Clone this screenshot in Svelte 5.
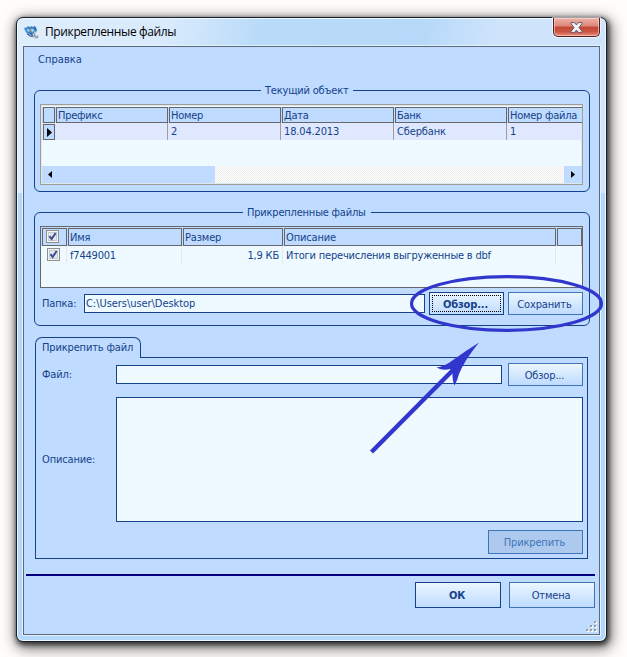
<script lang="ts">
	const objectHeaders = ['Префикс', 'Номер', 'Дата', 'Банк', 'Номер файла'];
	const objectRow = ['', '2', '18.04.2013', 'Сбербанк', '1'];

	let folder = $state('C:\\Users\\user\\Desktop');
	let file = $state('');
	let description = $state('');
</script>

{#snippet check()}
	<svg class="check" width="13" height="13" viewBox="0 0 13 13">
		<rect x=".5" y=".5" width="12" height="12" fill="#f4f4f4" stroke="#8e8f8f" />
		<rect x="2.5" y="2.5" width="8" height="8" fill="#e4e7eb" stroke="#c5cad0" />
		<path d="M3.5 6.2 5.6 9 9.7 3" fill="none" stroke="#3c4d91" stroke-width="2" />
	</svg>
{/snippet}

<div class="window">
	<div class="titlebar">
		<svg class="app-icon" width="16" height="16" viewBox="0 0 16 16">
			<path d="M0 4 2.500 3.500 4 2l2 1 1.500-1L9 3l2-1.500.5 2L13 5l-.5 3L10 10l-4 .5L3.500 9 2 8.500z" fill="#4089c8" />
			<path d="m2.500 5 2.500.5L5.500 8 4 7.500zM7.500 5l2.500.5L9 8 7 7z" fill="#b4daf4" />
			<path d="M3 9.500 6 12l2.500.5M6 9l3 3M11 3l.5 3" stroke="#2a5c92" stroke-width="1.200" fill="none" />
			<path d="m10.500 6.500 1.500 4 2.500 1.500-.5 2-3 .5-3-1.500 2-1.500-1-3z" fill="#8b98a6" />
			<path d="m11 7.500.5 3.500 2 1M9.500 13l2 .5" stroke="#e9edf0" fill="none" />
			<path d="M6 5h1.500v1.500H6z" fill="#d99a42" />
		</svg>
		<span class="title">Прикрепленные файлы</span>
		<button class="close" aria-label="Закрыть">
			<svg width="13" height="11" viewBox="0 0 13 11">
				<path
					d="M1 .6h3.700L6.500 3 8.300.6H12v1L9 5.500l3 3.900v1H8.300L6.500 8l-1.800 2.400H1v-1l3-3.900-3-3.900z"
					fill="#f3f3f5"
					stroke="#5c5a6c"
				/>
			</svg>
		</button>
	</div>

	<div class="client">
		<div class="menu">Справка</div>

		<fieldset class="current">
			<legend>Текущий объект</legend>
			<div class="grid object-grid">
				<div class="row head">
					<div class="cell"></div>
					{#each objectHeaders as header}
						<div class="cell">{header}</div>
					{/each}
				</div>
				<div class="row data">
					<div class="cell marker">
						<svg width="5" height="9" viewBox="0 0 5 9"><path d="M0 0 5 4.500 0 9z" /></svg>
					</div>
					{#each objectRow as value}
						<div class="cell">{value}</div>
					{/each}
				</div>
				<div class="scrollbar">
					<div class="thumb">
						<svg width="4" height="7" viewBox="0 0 4 7"><path d="M4 0v7L0 3.500z" /></svg>
					</div>
					<div class="scroll-right">
						<svg width="4" height="7" viewBox="0 0 4 7"><path d="M0 0v7l4-3.500z" /></svg>
					</div>
				</div>
			</div>
		</fieldset>

		<fieldset class="attached">
			<legend>Прикрепленные файлы</legend>
			<div class="grid file-grid">
				<div class="row head">
					<div class="cell">{@render check()}</div>
					<div class="cell">Имя</div>
					<div class="cell">Размер</div>
					<div class="cell">Описание</div>
					<div class="cell"></div>
				</div>
				<div class="row data">
					<div class="cell">{@render check()}</div>
					<div class="cell">f7449001</div>
					<div class="cell size">1,9 КБ</div>
					<div class="cell">Итоги перечисления выгруженные в dbf</div>
					<div class="cell"></div>
				</div>
			</div>
			<div class="folder">
				<label for="folder">Папка:</label>
				<input id="folder" class="field" bind:value={folder} />
				<button class="btn focused">Обзор...</button>
				<button class="btn">Сохранить</button>
			</div>
		</fieldset>

		<div class="tab">Прикрепить файл</div>
		<div class="panel">
			<div class="line">
				<label for="file">Файл:</label>
				<input id="file" class="field" bind:value={file} />
				<button class="btn">Обзор...</button>
			</div>
			<div class="line tall">
				<label for="description">Описание:</label>
				<textarea id="description" class="field" bind:value={description}></textarea>
			</div>
			<button class="btn attach" disabled>Прикрепить</button>
		</div>

		<div class="divider"></div>
		<div class="footer">
			<button class="btn default">ОК</button>
			<button class="btn">Отмена</button>
		</div>
		<svg class="grip" width="12" height="12" viewBox="0 0 12 12">
			{#each [[8, 0], [4, 4], [8, 4], [0, 8], [4, 8], [8, 8]] as [x, y]}
				<rect x={x + 1} y={y + 1} width="2" height="2" fill="#fff" />
				<rect {x} {y} width="2" height="2" fill="#a09d99" />
			{/each}
		</svg>
	</div>
</div>

<svg class="notes" width="627" height="657" viewBox="0 0 627 657">
	<ellipse cx="506.500" cy="303.500" rx="95" ry="26.800" fill="none" stroke="#3137cd" stroke-width="3.200" />
	<path d="M371.500 452 456 367" stroke="#3137cd" stroke-width="4.400" />
	<path d="M479 342.500Q464 361 459 374 457.500 380 454.500 385.500 452 380 452.500 371L450 369Q443 371 436.500 367.500 444 367 453 360 467 350 479 342.500z" fill="#3137cd" />
</svg>

<style>
	:global(body) {
		margin: 0;
		background: #fffcfb;
	}

	:global(#app) {
		position: relative;
		width: 627px;
		height: 657px;
		overflow: hidden;
		font: 11px/15px 'DejaVu Sans Condensed', 'DejaVu Sans', sans-serif;
		letter-spacing: -0.15px;
		color: #15428b;
	}

	.window,
	.window * {
		box-sizing: border-box;
	}

	.window {
		display: flex;
		flex-direction: column;
		width: 591px;
		height: 625px;
		border: 1px solid #15202c;
		border-radius: 7px;
		padding: 0 6px 6px 5px;
		background:
			linear-gradient(100deg, #deedfc 0, #d8eafc 25%, #b8dbf9 40%, #b6d9f9 66%, #cfe4fb 78%, #cfe4fb 100%) 0 0 / 100% 175px no-repeat,
			#b5d7fa;
		box-shadow:
			inset 0 0 0 1px #f0f8ff,
			1px 2px 5px 1px rgba(0, 0, 0, 0.65),
			2px 4px 14px 3px rgba(0, 0, 0, 0.5);
		translate: 16px 17px;
	}

	.titlebar {
		display: flex;
		flex: none;
		height: 27px;
	}

	.app-icon {
		margin: 6px 0 0 2px;
	}

	.title {
		margin: 4px 0 0 5px;
		font: 12px/20px 'Open Sans', sans-serif;
		letter-spacing: -0.38px;
		color: #000;
	}

	.close {
		display: flex;
		justify-content: center;
		width: 47px;
		height: 19px;
		margin-left: auto;
		padding: 4px 0 0;
		border: 1px solid #541f24;
		border-top: 0;
		border-radius: 0 0 5px 5px;
		background: linear-gradient(#efb4a9, #dd8577 45%, #c34835 50%, #ca5443 75%, #e78c7d);
		box-shadow: inset 0 0 0 1px rgba(255, 220, 210, 0.6), 0 0 0 1px rgba(255, 255, 255, 0.6);
	}

	.client {
		flex: 1;
		position: relative;
		border: 1px solid #5b6878;
		padding: 0 9px 0 10px;
		background: #bfdbff;
		box-shadow: 0 0 0 1px #e3f2ff;
		margin: 1px 0 0 1px;
	}

	.menu {
		height: 36px;
		padding: 5px 5px 4px 4px;
		letter-spacing: 0.05px;
	}

	fieldset {
		min-width: 0;
		margin: 0;
		border: 1px solid #15428b;
		border-radius: 6px;
		padding: 6px 6px 6px 5px;
	}

	legend {
		height: 15px;
		padding: 0 4px;
		letter-spacing: -0.2px;
		white-space: nowrap;
	}

	.current {
		height: 109px;
	}

	.current legend {
		width: 92px;
		margin-left: 221px;
	}

	.attached {
		height: 121px;
		margin-top: 13px;
	}

	.attached legend {
		width: 128px;
		margin-left: 203px;
	}

	.grid {
		overflow: hidden;
		background: #eefaff;
	}

	.row {
		display: grid;
	}

	.cell {
		white-space: nowrap;
		overflow: hidden;
	}

	.object-grid {
		height: 81px;
		border: 1px solid #a09d99;
		padding: 2px 0 1px 1px;
		box-shadow: inset 0 0 0 1px #dce8ee;
	}

	.object-grid .row {
		grid-template-columns: 13px repeat(5, 113px);
	}

	.object-grid .head {
		height: 16px;
		background: #bfdbff;
	}

	.object-grid .head .cell {
		margin-left: 1px;
		border: 1px solid #67676b;
		padding-left: 1px;
		line-height: 15px;
		letter-spacing: -0.25px;
	}

	.object-grid .data {
		height: 17px;
		background: #dfe8ff;
	}

	.object-grid .data .cell {
		border-right: 1px solid #a09d99;
		padding: 1px 0 0 3px;
	}

	.object-grid .data .marker {
		display: flex;
		align-items: center;
		justify-content: center;
		width: 12px;
		margin: 1px 0 0 1px;
		border: 1px solid #67676b;
		padding: 0;
		background: #bfdbff;
	}

	.scrollbar {
		display: flex;
		justify-content: space-between;
		height: 17px;
		margin-top: 26px;
		background: repeating-conic-gradient(#fff 0 25%, #ececec 0 50%) 0 0 / 2px 2px;
	}

	.thumb,
	.scroll-right {
		display: flex;
		align-items: center;
		background: #bfdbff;
	}

	.thumb {
		width: 173px;
		padding-left: 6px;
	}

	.scroll-right {
		width: 18px;
		padding-left: 7px;
	}

	.file-grid {
		height: 62px;
		border: 1px solid #67676b;
	}

	.file-grid .row {
		grid-template-columns: 26px 115px 101px 273px 26px;
	}

	.file-grid .head {
		height: 19px;
		padding-top: 1px;
		background: #bfdbff;
	}

	.file-grid .head .cell {
		margin-left: 1px;
		border: 1px solid #67676b;
		padding-left: 1px;
		line-height: 17px;
	}

	.file-grid .data .cell {
		height: 18px;
		border-right: 1px solid #e6e9ec;
		padding: 2px 0 0 3px;
		letter-spacing: -0.2px;
	}

	.file-grid .data .size {
		padding-right: 3px;
		text-align: right;
	}

	.check {
		display: block;
		margin: 1px 0 0 2px;
	}

	.file-grid .data .check {
		margin: 0 0 0 3px;
	}

	.folder {
		display: flex;
		align-items: center;
		margin-top: 4px;
	}

	.folder label {
		width: 44px;
		padding-left: 2px;
	}

	.field {
		border: 1px solid #15428b;
		border-radius: 0;
		padding: 0 1px;
		background: #eefaff;
		font: inherit;
		letter-spacing: -0.05px;
		color: inherit;
		outline: 0;
		resize: none;
	}

	input.field {
		height: 19px;
	}

	#folder {
		width: 341px;
		margin-right: 4px;
	}

	.btn {
		flex: none;
		width: 75px;
		height: 23px;
		border: 1px solid #3f75b5;
		padding: 1px 2px 0 0;
		background: linear-gradient(#ebf6ff, #bfdbff);
		font: inherit;
		letter-spacing: inherit;
		color: inherit;
	}

	.folder .btn + .btn {
		margin-left: 4px;
	}

	.focused {
		border-color: #15428b;
		font-weight: bold;
		outline: 1px dotted #000;
		outline-offset: -4px;
	}

	.tab {
		position: relative;
		width: 106px;
		height: 21px;
		margin: 11px 0 -1px 1px;
		border: 1px solid #15428b;
		border-bottom: 0;
		border-radius: 7px 7px 0 0;
		padding: 2px 0 0 6px;
		background: #bfdbff;
		white-space: nowrap;
	}

	.panel {
		display: flex;
		flex-direction: column;
		width: 553px;
		height: 202px;
		margin-left: 1px;
		border: 1px solid #15428b;
		padding: 5px 4px 4px 6px;
	}

	.line {
		display: flex;
		align-items: center;
	}

	.line label {
		width: 74px;
	}

	#file {
		width: 386px;
		margin-right: 6px;
	}

	.tall {
		margin: 11px 0 8px;
	}

	#description {
		width: 467px;
		height: 125px;
	}

	.attach {
		align-self: flex-end;
		width: 95px;
		height: 24px;
		background: #adc9ee;
		color: #3f75b5;
	}

	.divider {
		height: 2px;
		margin: 15px -5px 6px -8px;
		background: #000080;
	}

	.footer {
		display: flex;
		justify-content: flex-end;
		gap: 8px;
		margin-right: -5px;
	}

	.footer .btn {
		width: 86px;
		height: 26px;
		padding-top: 0;
	}

	.footer .default {
		border-color: #15428b;
		font-weight: bold;
	}

	.grip {
		position: absolute;
		right: 1px;
		bottom: 1px;
	}

	.notes {
		position: absolute;
		inset: 0;
		pointer-events: none;
	}
</style>
